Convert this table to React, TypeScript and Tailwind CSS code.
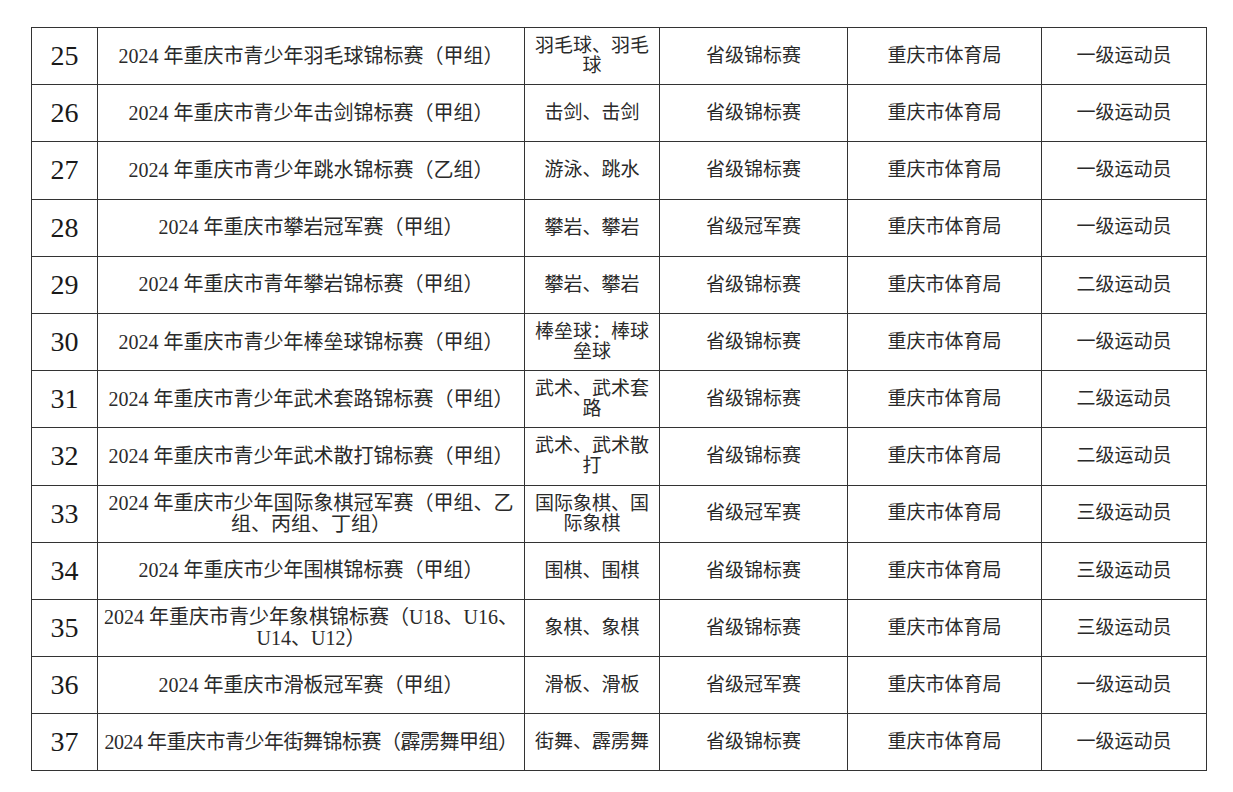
const rows: [string, string[], string[], string, string, string][] = [
  ['25', ['2024 年重庆市青少年羽毛球锦标赛（甲组）'], ['羽毛球、羽毛', '球'], '省级锦标赛', '重庆市体育局', '一级运动员'],
  ['26', ['2024 年重庆市青少年击剑锦标赛（甲组）'], ['击剑、击剑'], '省级锦标赛', '重庆市体育局', '一级运动员'],
  ['27', ['2024 年重庆市青少年跳水锦标赛（乙组）'], ['游泳、跳水'], '省级锦标赛', '重庆市体育局', '一级运动员'],
  ['28', ['2024 年重庆市攀岩冠军赛（甲组）'], ['攀岩、攀岩'], '省级冠军赛', '重庆市体育局', '一级运动员'],
  ['29', ['2024 年重庆市青年攀岩锦标赛（甲组）'], ['攀岩、攀岩'], '省级锦标赛', '重庆市体育局', '二级运动员'],
  ['30', ['2024 年重庆市青少年棒垒球锦标赛（甲组）'], ['棒垒球：棒球', '垒球'], '省级锦标赛', '重庆市体育局', '一级运动员'],
  ['31', ['2024 年重庆市青少年武术套路锦标赛（甲组）'], ['武术、武术套', '路'], '省级锦标赛', '重庆市体育局', '二级运动员'],
  ['32', ['2024 年重庆市青少年武术散打锦标赛（甲组）'], ['武术、武术散', '打'], '省级锦标赛', '重庆市体育局', '二级运动员'],
  ['33', ['2024 年重庆市少年国际象棋冠军赛（甲组、乙', '组、丙组、丁组）'], ['国际象棋、国', '际象棋'], '省级冠军赛', '重庆市体育局', '三级运动员'],
  ['34', ['2024 年重庆市少年围棋锦标赛（甲组）'], ['围棋、围棋'], '省级锦标赛', '重庆市体育局', '三级运动员'],
  ['35', ['2024 年重庆市青少年象棋锦标赛（U18、U16、', 'U14、U12）'], ['象棋、象棋'], '省级锦标赛', '重庆市体育局', '三级运动员'],
  ['36', ['2024 年重庆市滑板冠军赛（甲组）'], ['滑板、滑板'], '省级冠军赛', '重庆市体育局', '一级运动员'],
  ['37', ['2024 年重庆市青少年街舞锦标赛（霹雳舞甲组）'], ['街舞、霹雳舞'], '省级锦标赛', '重庆市体育局', '一级运动员'],
];

function Lines({ lines }: { lines: string[] }) {
  return (
    <>
      {lines.map((l, i) => (
        <div key={i} className="whitespace-nowrap">
          {l}
        </div>
      ))}
    </>
  );
}

export default function App() {
  const cell = 'border border-[#333] text-center align-middle p-0';
  return (
    <div className="min-h-[792px] w-[1233px] bg-white pt-[27px] pl-[31px] font-['Liberation_Serif','Noto_Sans_CJK_SC',serif] text-[#2a2a2a]">
      <table className="table-fixed border-collapse w-[1175px]">
        <colgroup>
          <col className="w-[66px]" />
          <col className="w-[427px]" />
          <col className="w-[135px]" />
          <col className="w-[188px]" />
          <col className="w-[194px]" />
          <col className="w-[165px]" />
        </colgroup>
        <tbody>
          {rows.map(([no, name, sport, level, org, grade]) => (
            <tr key={no} className="h-[57.2px]">
              <td className={`${cell} text-[28px] text-[#1a1a1a]`}>{no}</td>
              <td className={`${cell} text-[20px] leading-[21px] ${no === '37' ? 'tracking-[-0.5px]' : ''}`}>
                <Lines lines={name} />
              </td>
              <td className={`${cell} text-[19px] leading-[20px]`}>
                <Lines lines={sport} />
              </td>
              <td className={`${cell} text-[19px]`}>{level}</td>
              <td className={`${cell} text-[19px]`}>{org}</td>
              <td className={`${cell} text-[19px]`}>{grade}</td>
            </tr>
          ))}
        </tbody>
      </table>
    </div>
  );
}
